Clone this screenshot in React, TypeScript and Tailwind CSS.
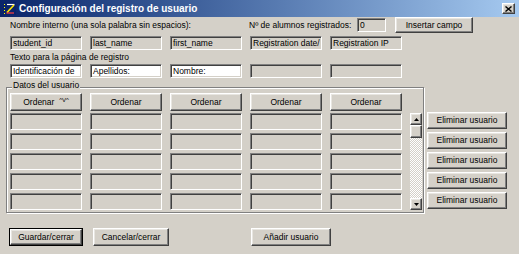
import React from "react";

const sunken =
  "border border-t-[#808080] border-l-[#808080] border-b-white border-r-white shadow-[inset_1px_1px_0_#404040,inset_-1px_-1px_0_#d4d0c8]";
const raised =
  "border border-t-white border-l-white border-b-[#404040] border-r-[#404040] shadow-[inset_-1px_-1px_0_#808080,inset_1px_1px_0_#e8e6e1]";

function Field({ text = "", white = false, h = "h-[14px]", w = "w-[72px]" }: { text?: string; white?: boolean; h?: string; w?: string }) {
  return (
    <div className={`${sunken} ${h} ${w} ${white ? "bg-white" : "bg-[#d4d0c8]"} flex items-center overflow-hidden whitespace-nowrap pl-[2px] leading-none`}>
      {text}
    </div>
  );
}

function Btn({ children, w, h = "h-[18px]", def = false }: { children: React.ReactNode; w: string; h?: string; def?: boolean }) {
  if (def) {
    return (
      <div className={`${w} ${h} border border-black`}>
        <div className={`${raised} w-full h-full flex items-center justify-center leading-none whitespace-nowrap`}>{children}</div>
      </div>
    );
  }
  return (
    <div className={`${raised} ${w} ${h} flex items-center justify-center leading-none whitespace-nowrap`}>{children}</div>
  );
}

function AppIcon() {
  return (
    <svg width="13" height="13" viewBox="0 0 13 13">
      <rect x="0" y="0" width="13" height="13" fill="#0a246a" />
      <rect x="1" y="2" width="1" height="1" fill="#ffff00" />
      <rect x="1" y="5" width="1" height="1" fill="#ffff00" />
      <rect x="1" y="8" width="1" height="1" fill="#ffff00" />
      <rect x="1" y="11" width="1" height="1" fill="#ffff00" />
      <path d="M4 2.5 H11.5" stroke="#ffffff" strokeWidth="1.2" />
      <path d="M11 3 L4 10.5" stroke="#ffe600" strokeWidth="1.6" />
      <path d="M3.5 11 H11" stroke="#ff4040" strokeWidth="1.2" />
    </svg>
  );
}

export default function App() {
  const cols = [0, 1, 2, 3, 4];
  return (
    <div className="w-[519px] h-[254px] bg-[#d4d0c8] overflow-hidden text-black text-[8.5px] font-['Liberation_Sans',Arial,sans-serif] flex flex-col">
      {/* Title bar */}
      <div className="h-[17px] flex items-center bg-gradient-to-r from-[#0a246a] to-[#a6caf0] pl-[3px] pr-[4px]">
        <AppIcon />
        <span className="ml-[3px] text-white font-bold text-[10px] leading-none">Configuración del registro de usuario</span>
        <div className="ml-auto">
          <div className={`${raised} w-[13px] h-[11px] bg-[#d4d0c8] flex items-center justify-center`}>
            <svg width="7" height="6" viewBox="0 0 7 6">
              <path d="M0.5 0.5 L6.5 5.5 M6.5 0.5 L0.5 5.5" stroke="#000" strokeWidth="1.4" />
            </svg>
          </div>
        </div>
      </div>

      {/* Row A */}
      <div className="h-[16px] flex items-center pl-[10px]">
        <span className="w-[239px]">Nombre interno (una sola palabra sin espacios):</span>
        <span className="w-[108px]">Nº de alumnos registrados:</span>
        <Field text="0" w="w-[29px]" />
        <div className="ml-[9px]">
          <Btn w="w-[78px]" h="h-[16px]">Insertar campo</Btn>
        </div>
      </div>

      {/* Row B */}
      <div className="mt-[3px] pl-[10px] flex gap-[8px]">
        <Field text="student_id" />
        <Field text="last_name" />
        <Field text="first_name" />
        <Field text="Registration date/" />
        <Field text="Registration IP" />
      </div>

      <div className="h-[14px] pl-[10px] flex items-center">Texto para la página de registro</div>

      {/* Row C */}
      <div className="pl-[10px] flex gap-[8px]">
        <Field text="Identificación de" white />
        <Field text="Apellidos:" white />
        <Field text="Nombre:" white />
        <Field />
        <Field />
      </div>

      {/* Group + delete buttons */}
      <div className="mt-[9px] pl-[6px] flex">
        <div className="relative w-[418px] h-[126px] border border-[#808080] shadow-[inset_1px_1px_0_#fff,1px_1px_0_#fff] pl-[3px] pt-[5px]">
          <span className="absolute left-[5px] top-[-7px] bg-[#d4d0c8] px-[1px] leading-none">Datos del usuario</span>
          <div className="flex">
            <div className="flex flex-col">
              <div className="flex gap-[8px]">
                <Btn w="w-[72px]">Ordenar&nbsp;&nbsp;<span className="text-[6px] relative -top-[2px]">^V^</span></Btn>
                <Btn w="w-[72px]">Ordenar</Btn>
                <Btn w="w-[72px]">Ordenar</Btn>
                <Btn w="w-[72px]">Ordenar</Btn>
                <Btn w="w-[72px]">Ordenar</Btn>
              </div>
              <div className="mt-[2px] flex flex-col gap-[3px]">
                {cols.map((r) => (
                  <div key={r} className="flex gap-[8px]">
                    {cols.map((c) => (
                      <Field key={c} h="h-[17px]" />
                    ))}
                  </div>
                ))}
              </div>
            </div>
            {/* scrollbar */}
            <div className="ml-[8px] mt-[20px] w-[12px] h-[97px] flex flex-col bg-[repeating-conic-gradient(#ffffff_0_25%,#d4d0c8_0_50%)] bg-[length:2px_2px]">
              <div className={`${raised} h-[12px] bg-[#d4d0c8] flex items-center justify-center`}>
                <svg width="5" height="3" viewBox="0 0 5 3"><path d="M2.5 0 L5 3 H0 Z" fill="#000" /></svg>
              </div>
              <div className={`${raised} h-[13px] bg-[#d4d0c8]`} />
              <div className="flex-1" />
              <div className={`${raised} h-[12px] bg-[#d4d0c8] flex items-center justify-center`}>
                <svg width="5" height="3" viewBox="0 0 5 3"><path d="M0 0 H5 L2.5 3 Z" fill="#000" /></svg>
              </div>
            </div>
          </div>
        </div>
        <div className="ml-[3px] pt-[25px] flex flex-col gap-[3px]">
          {cols.map((r) => (
            <Btn key={r} w="w-[80px]" h="h-[17px]">Eliminar usuario</Btn>
          ))}
        </div>
      </div>

      {/* Bottom buttons */}
      <div className="mt-[15px] pl-[9px] flex">
        <Btn w="w-[74px]" def>Guardar/cerrar</Btn>
        <div className="ml-[10px]">
          <Btn w="w-[76px]">Cancelar/cerrar</Btn>
        </div>
        <div className="ml-[82px]">
          <Btn w="w-[80px]">Añadir usuario</Btn>
        </div>
      </div>
    </div>
  );
}
